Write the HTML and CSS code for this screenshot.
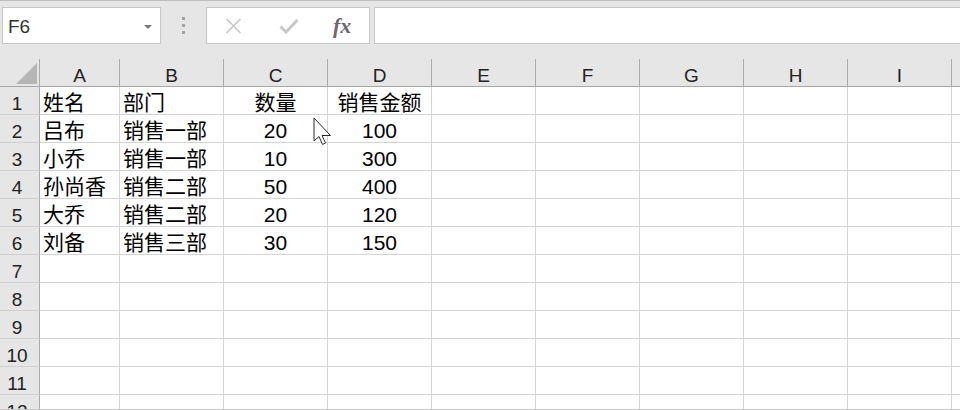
FILE: index.html
```html
<!DOCTYPE html>
<html lang="zh-CN">
<head>
<meta charset="utf-8">
<title>Excel</title>
<link rel="stylesheet" href="styles.css">
</head>
<body>
<div class="app">
  <div class="toolbar">
    <div class="namebox"><span class="ref">F6</span><i class="caret"></i></div>
    <div class="grip"><i></i><i></i><i></i></div>
    <div class="fbtns">
      <svg class="ico-x" width="17" height="16" viewBox="0 0 17 16"><path d="M1.5 1L15.5 15M15.5 1L1.5 15" stroke="#c6c6c6" stroke-width="1.6" fill="none"/></svg>
      <svg class="ico-ok" width="20" height="16" viewBox="0 0 20 16"><path d="M1.5 8.5L7 14L18.5 2" stroke="#c8c8c8" stroke-width="3" fill="none"/></svg>
      <span class="fx">fx</span>
    </div>
    <div class="finput"></div>
  </div>
  <div class="sheet">
    <div class="h corner"><svg width="21" height="21" viewBox="0 0 21 21"><path d="M21 0L21 21L0 21Z" fill="#b5b5b5"/></svg></div>
    <div class="h">A</div><div class="h">B</div><div class="h">C</div><div class="h">D</div><div class="h">E</div><div class="h">F</div><div class="h">G</div><div class="h">H</div><div class="h">I</div><div class="h last"></div>

    <div class="r">1</div><div class="c">姓名</div><div class="c">部门</div><div class="c ctr">数量</div><div class="c ctr">销售金额</div><div class="c"></div><div class="c"></div><div class="c"></div><div class="c"></div><div class="c"></div><div class="c last"></div>
    <div class="r">2</div><div class="c">吕布</div><div class="c">销售一部</div><div class="c ctr">20</div><div class="c ctr">100</div><div class="c"></div><div class="c"></div><div class="c"></div><div class="c"></div><div class="c"></div><div class="c last"></div>
    <div class="r">3</div><div class="c">小乔</div><div class="c">销售一部</div><div class="c ctr">10</div><div class="c ctr">300</div><div class="c"></div><div class="c"></div><div class="c"></div><div class="c"></div><div class="c"></div><div class="c last"></div>
    <div class="r">4</div><div class="c">孙尚香</div><div class="c">销售二部</div><div class="c ctr">50</div><div class="c ctr">400</div><div class="c"></div><div class="c"></div><div class="c"></div><div class="c"></div><div class="c"></div><div class="c last"></div>
    <div class="r">5</div><div class="c">大乔</div><div class="c">销售二部</div><div class="c ctr">20</div><div class="c ctr">120</div><div class="c"></div><div class="c"></div><div class="c"></div><div class="c"></div><div class="c"></div><div class="c last"></div>
    <div class="r">6</div><div class="c">刘备</div><div class="c">销售三部</div><div class="c ctr">30</div><div class="c ctr">150</div><div class="c"></div><div class="c"></div><div class="c"></div><div class="c"></div><div class="c"></div><div class="c last"></div>
    <div class="r">7</div><div class="c"></div><div class="c"></div><div class="c"></div><div class="c"></div><div class="c"></div><div class="c"></div><div class="c"></div><div class="c"></div><div class="c"></div><div class="c last"></div>
    <div class="r">8</div><div class="c"></div><div class="c"></div><div class="c"></div><div class="c"></div><div class="c"></div><div class="c"></div><div class="c"></div><div class="c"></div><div class="c"></div><div class="c last"></div>
    <div class="r">9</div><div class="c"></div><div class="c"></div><div class="c"></div><div class="c"></div><div class="c"></div><div class="c"></div><div class="c"></div><div class="c"></div><div class="c"></div><div class="c last"></div>
    <div class="r">10</div><div class="c"></div><div class="c"></div><div class="c"></div><div class="c"></div><div class="c"></div><div class="c"></div><div class="c"></div><div class="c"></div><div class="c"></div><div class="c last"></div>
    <div class="r">11</div><div class="c"></div><div class="c"></div><div class="c"></div><div class="c"></div><div class="c"></div><div class="c"></div><div class="c"></div><div class="c"></div><div class="c"></div><div class="c last"></div>
    <div class="r">12</div><div class="c"></div><div class="c"></div><div class="c"></div><div class="c"></div><div class="c"></div><div class="c"></div><div class="c"></div><div class="c"></div><div class="c"></div><div class="c last"></div>
  </div>
  <svg class="cursor" width="20" height="30" viewBox="0 0 20 30"><path d="M1 1L1 24L6 19.5L9.5 27.5L12.5 26L9 18.5L17.5 18.5Z" fill="#fff" stroke="#2a2a2a" stroke-width="1" stroke-linejoin="miter"/></svg>
</div>
</body>
</html>
```

FILE: styles.css
```css
* { box-sizing: border-box; }

body {
  margin: 0;
  background: #e6e6e6;
  font-family: "Liberation Sans", "Noto Sans CJK SC", sans-serif;
}

.app {
  position: relative;
  height: 410px;
  overflow: hidden;
  background: #e6e6e6;
  border-top: 1px solid #bdbdbd;
  border-bottom: 1px solid #c6c6c6;
}

.toolbar {
  display: flex;
  padding-top: 6px;
  height: 43px;
}

.namebox {
  margin-left: 2px;
  width: 159px;
  height: 37px;
  background: #fff;
  border: 1px solid #c6c6c6;
  display: flex;
  align-items: center;
  padding: 2px 0 0 5px;
  font-size: 19px;
  color: #333;
}

.ref { line-height: 21px; }

.caret {
  margin-left: auto;
  margin-right: 8px;
  width: 0;
  height: 0;
  border-left: 4px solid transparent;
  border-right: 4px solid transparent;
  border-top: 4px solid #7a7a7a;
}

.grip {
  width: 45px;
  height: 37px;
  display: flex;
  flex-direction: column;
  align-items: center;
  justify-content: center;
  gap: 4px;
}

.grip i {
  display: block;
  width: 3px;
  height: 3px;
  background: #a3a3a3;
}

.fbtns {
  width: 164px;
  height: 37px;
  background: #fff;
  border: 1px solid #c6c6c6;
  display: flex;
  align-items: center;
  padding-left: 18px;
}

.ico-ok { margin-left: 37px; }

.fx {
  margin-left: 34px;
  font-family: "Liberation Serif", serif;
  font-style: italic;
  font-weight: bold;
  font-size: 22px;
  line-height: 1;
  color: #6d6870;
}

.finput {
  flex: 1;
  margin-left: 4px;
  height: 37px;
  background: #fff;
  border: 1px solid #c6c6c6;
  border-right: none;
}

.sheet {
  margin-top: 15px;
  display: grid;
  grid-template-columns: 40px 80px repeat(8, 104px) 1fr;
  grid-auto-rows: 28px;
}

.h {
  background: #e6e6e6;
  border-right: 1px solid #ababab;
  border-bottom: 1px solid #a6a6a6;
  font-size: 19px;
  line-height: 23px;
  padding-top: 5px;
  text-align: center;
  color: #222;
}

.h.last { border-right: none; }

.corner {
  display: flex;
  align-items: flex-end;
  justify-content: flex-end;
  padding: 0 2px 2px 0;
}

.r {
  background: #e6e6e6;
  border-right: 1px solid #ababab;
  border-bottom: 1px solid #d0d0d0;
  font-size: 19px;
  line-height: 23px;
  padding: 5px 5px 0 0;
  text-align: center;
  color: #222;
}

.c {
  background: #fff;
  border-right: 1px solid #d4d4d4;
  border-bottom: 1px solid #d4d4d4;
  font-size: 21px;
  line-height: 23px;
  padding: 4px 3px 0;
  white-space: nowrap;
  overflow: hidden;
  color: #000;
}

.c.last { border-right: none; }

.ctr { text-align: center; }

.cursor {
  position: absolute;
  left: 313px;
  top: 116px;
}
```
